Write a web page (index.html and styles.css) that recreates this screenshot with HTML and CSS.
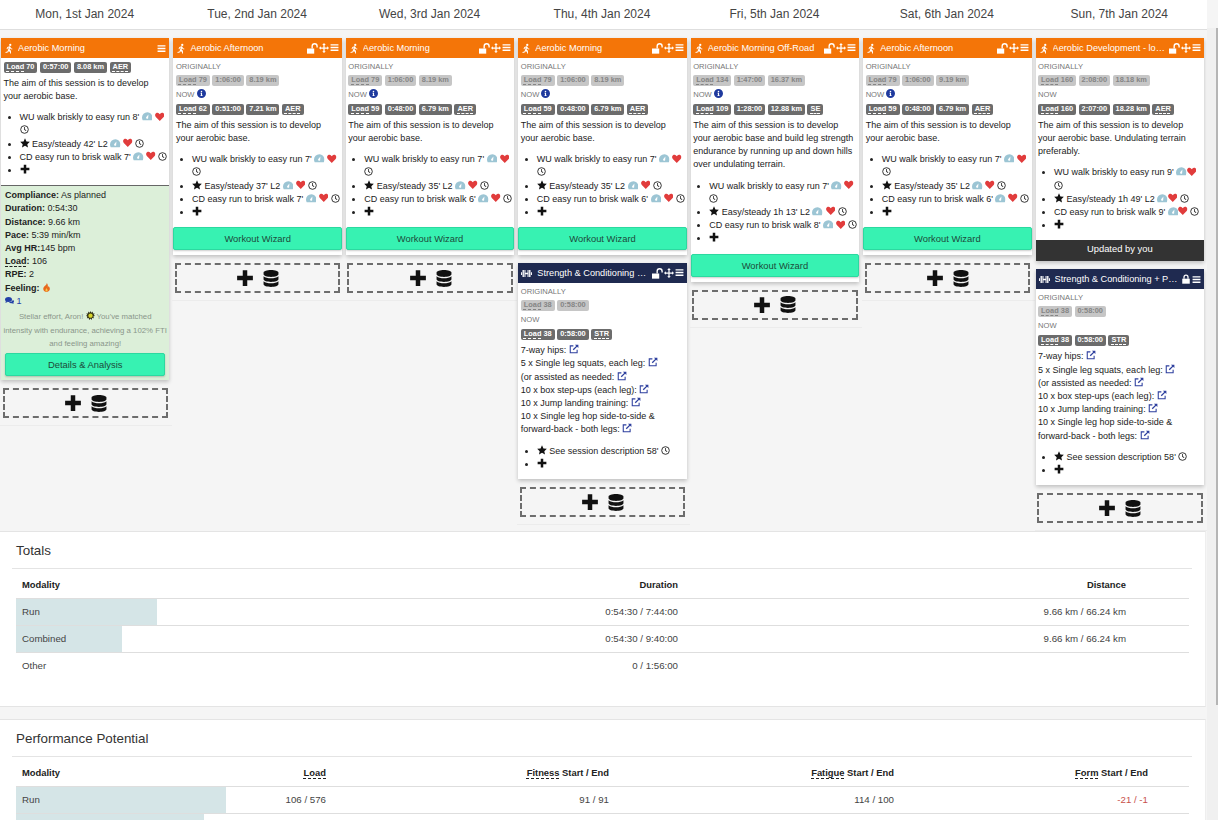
FILE: index.html
```html
<!DOCTYPE html>
<html lang="en">
<head>
    <meta charset="UTF-8">
    <title>Training Plan</title>
    <link rel="stylesheet" href="styles.css">
</head>
<body>
<svg class="sprites" width="0" height="0">
    <symbol id="i-run" viewBox="0 0 16 16"><circle cx="10" cy="2.2" r="1.8"/><path d="M8.6 4.4 5.4 5.6 4 8.6l1.4.6 1.1-2.3 1.2-.4-1.3 3.7-.9 2.5-3.2 1 .4 1.5 4-1.1 1.1-2 1.8 1.7V16h1.5v-4.6L9 9.5l.6-2.2.7 1.4 2.7 1 .5-1.4-2.2-.8-1-2.4c-.4-.8-1-1-1.7-.7z"/></symbol>
    <symbol id="i-lock-open" viewBox="0 0 16 16"><path d="M0 8h10.500v7.500H0z"/><path d="M7.500 8V4.600a3.600 3.600 0 0 1 7.200 0V6.500" fill="none" stroke="currentColor" stroke-width="2"/></symbol>
    <symbol id="i-lock" viewBox="0 0 16 16"><path d="M2 7.500h12V15.500H2z"/><path d="M4.800 7.500V5a3.200 3.200 0 0 1 6.400 0v2.500" fill="none" stroke="currentColor" stroke-width="2"/></symbol>
    <symbol id="i-move" viewBox="0 0 16 16"><path d="M8 0l2.800 3H9v4h4V5.200L16 8l-3 2.800V9H9v4h1.800L8 16l-2.800-3H7V9H3v1.800L0 8l3-2.800V7h4V3H5.200z"/></symbol>
    <symbol id="i-menu" viewBox="0 0 16 16"><path d="M1 2h14v2.400H1zM1 6.800h14v2.400H1zM1 11.600h14V14H1z"/></symbol>
    <symbol id="i-dumbbell" viewBox="0 0 16 16"><path d="M0 6h1.400v4H0zM2.200 3h2v10h-2zM5 3h1.500v10H5zM6.500 7h3v2h-3zM9.500 3H11v10H9.500zM11.800 3h2v10h-2zM14.600 6H16v4h-1.400z"/></symbol>
    <symbol id="i-gauge" viewBox="0 0 16 16"><path fill-rule="evenodd" d="M8 2a8 8 0 0 0-8 8c0 1.500.4 2.900 1.100 4h13.800A8 8 0 0 0 8 2zm1.300 9.400a1.800 1.800 0 0 1-3-1.700l3.500-4.400z"/></symbol>
    <symbol id="i-heart" viewBox="0 0 16 16"><path d="M8 15 1.400 8.300C-.4 6.400-.2 3.500 1.700 2.100c1.800-1.300 4.200-.9 5.500.7l.8 1 .8-1c1.300-1.600 3.700-2 5.500-.7 1.900 1.400 2.100 4.300.3 6.200z"/></symbol>
    <symbol id="i-clock" viewBox="0 0 16 16"><circle cx="8" cy="8" r="6.800" fill="none" stroke="currentColor" stroke-width="1.600"/><path d="M7.300 3.600h1.400v4.100l2.600 1.800-.8 1.100-3.200-2.300z"/></symbol>
    <symbol id="i-star" viewBox="0 0 16 16"><path d="M8 .5l2.300 5 5.400.6-4 3.700 1.100 5.400L8 12.500l-4.800 2.700 1.100-5.400-4-3.700 5.400-.6z"/></symbol>
    <symbol id="i-plus" viewBox="0 0 16 16"><path d="M6 1h4v5h5v4h-5v5H6v-5H1V6h5z"/></symbol>
    <symbol id="i-db" viewBox="0 0 14 16"><path d="M7 0C3.200 0 0 1.100 0 2.500v1.600C0 5.500 3.200 6.600 7 6.600s7-1.100 7-2.500V2.500C14 1.100 10.800 0 7 0z"/><path d="M0 5.800v3C0 10.200 3.200 11.300 7 11.300s7-1.100 7-2.500v-3c-1.500 1.300-4.300 1.900-7 1.900s-5.500-.6-7-1.900z"/><path d="M0 10.500v3C0 14.900 3.200 16 7 16s7-1.100 7-2.500v-3c-1.500 1.300-4.300 1.900-7 1.900s-5.500-.6-7-1.900z"/></symbol>
    <symbol id="i-info" viewBox="0 0 16 16"><path d="M8 0a8 8 0 1 0 0 16A8 8 0 0 0 8 0zm0 3a1.400 1.400 0 1 1 0 2.800A1.400 1.400 0 0 1 8 3zm2 9.500H6.200v-1.200h.8V8H6.200V6.800H9v4.500h1z"/></symbol>
    <symbol id="i-link" viewBox="0 0 16 16"><path d="M7 3H2v11h11V9" fill="none" stroke="currentColor" stroke-width="1.700"/><path d="M9.500 1H15v5.500l-2-2-5.500 5.500-1.500-1.500L11.500 3z"/></symbol>
    <symbol id="i-comments" viewBox="0 0 18 16"><ellipse cx="7" cy="6" rx="7" ry="5"/><path d="M2 9 .8 13 6 10.500z"/><path d="M15.500 6.500c1.600.8 2.500 2 2.500 3.400 0 1-.5 2-1.500 2.700l.8 2.400-3.300-1.600c-2.500.4-5-.3-6.300-2 4.300.1 8-1.800 7.800-4.900z"/></symbol>
    <symbol id="i-fire" viewBox="0 0 14 16"><path d="M7.500 0c.5 3-4 5-5.700 8.200C.2 11.700 2.500 16 7 16s6.800-4 5.600-7.400c-.5-1.500-1.300-2.500-2-3.200 0 1.300-.5 2-1.200 2.400C9.800 5 9.300 2 7.500 0z" fill="#e8681c"/><path d="M7 9c.2 1.500-2 2.400-1.800 4.200.1 1 .9 1.800 1.900 1.800s1.900-.9 1.900-2c0-1.600-1.500-2.500-2-4z" fill="#f7c948"/></symbol>
    <symbol id="i-burst" viewBox="0 0 16 16"><path d="M8 0l1.400 3L12 1l.2 3.300 3.300.2-2 2.600 2.500 1.400-3 1.400 1 3.100-3.200-.5L10 16l-2-2.600L5.500 16l-.7-3.400-3.300.5 1-3.100L0 8.500l2.500-1.400-2-2.600 3.300-.2L4 1l2.600 2z" fill="#2d2d12"/><circle cx="8" cy="8.300" r="3.900" fill="#d6d32c"/></symbol>
</svg>

<div class="page">
    <div class="content">
        <div class="day-heads">
            <div>Mon, 1st Jan 2024</div>
            <div>Tue, 2nd Jan 2024</div>
            <div>Wed, 3rd Jan 2024</div>
            <div>Thu, 4th Jan 2024</div>
            <div>Fri, 5th Jan 2024</div>
            <div>Sat, 6th Jan 2024</div>
            <div>Sun, 7th Jan 2024</div>
        </div>

        <div class="week">
            <!-- monday -->
            <div class="day">
                <div class="card card-done">
                    <div class="card-head run">
                        <svg class="ic head-ic"><use href="#i-run"/></svg>
                        <span class="card-title">Aerobic Morning</span>
                        <span class="head-tools"><svg class="ic"><use href="#i-menu"/></svg></span>
                    </div>
                    <div class="card-body">
                        <div class="chips"><span class="chip"><u>Load</u> 70</span><span class="chip">0:57:00</span><span class="chip">8.08 km</span><span class="chip"><u>AER</u></span></div>
                        <p class="desc">The aim of this session is to develop your aerobic base.</p>
                        <ul class="steps">
                            <li>WU walk briskly to easy run 8' <svg class="ic gauge"><use href="#i-gauge"/></svg> <svg class="ic heart"><use href="#i-heart"/></svg> <svg class="ic"><use href="#i-clock"/></svg></li>
                            <li><svg class="ic star"><use href="#i-star"/></svg> Easy/steady 42' L2 <svg class="ic gauge"><use href="#i-gauge"/></svg> <svg class="ic heart"><use href="#i-heart"/></svg> <svg class="ic"><use href="#i-clock"/></svg></li>
                            <li>CD easy run to brisk walk 7' <svg class="ic gauge"><use href="#i-gauge"/></svg> <svg class="ic heart"><use href="#i-heart"/></svg> <svg class="ic"><use href="#i-clock"/></svg></li>
                            <li><svg class="ic star"><use href="#i-plus"/></svg></li>
                        </ul>
                    </div>
                    <div class="result">
                        <div><b>Compliance:</b> As planned</div>
                        <div><b>Duration:</b> 0:54:30</div>
                        <div><b>Distance:</b> 9.66 km</div>
                        <div><b>Pace:</b> 5:39 min/km</div>
                        <div><b>Avg HR:</b>145 bpm</div>
                        <div><b><u>Load</u>:</b> 106</div>
                        <div><b>RPE:</b> 2</div>
                        <div><b>Feeling:</b> <svg class="ic"><use href="#i-fire"/></svg></div>
                        <div class="comments"><svg class="ic"><use href="#i-comments"/></svg> 1</div>
                        <p class="praise">Stellar effort, Aron! <svg class="ic"><use href="#i-burst"/></svg> You've matched<br>intensity with endurance, achieving a 102% FTI<br>and feeling amazing!</p>
                        <button class="wizard">Details &amp; Analysis</button>
                    </div>
                </div>
                <div class="add"><svg class="add-plus"><use href="#i-plus"/></svg><svg class="add-db"><use href="#i-db"/></svg></div>
            </div>

            <!-- tuesday -->
            <div class="day">
                <div class="card">
                    <div class="card-head run">
                        <svg class="ic head-ic"><use href="#i-run"/></svg>
                        <span class="card-title">Aerobic Afternoon</span>
                        <span class="head-tools"><svg class="ic wide"><use href="#i-lock-open"/></svg><svg class="ic"><use href="#i-move"/></svg><svg class="ic"><use href="#i-menu"/></svg></span>
                    </div>
                    <div class="card-body">
                        <div class="label">ORIGINALLY</div>
                        <div class="chips old"><span class="chip"><u>Load</u> 79</span><span class="chip">1:06:00</span><span class="chip">8.19 km</span></div>
                        <div class="label">NOW <svg class="ic info"><use href="#i-info"/></svg></div>
                        <div class="chips"><span class="chip"><u>Load</u> 62</span><span class="chip">0:51:00</span><span class="chip">7.21 km</span><span class="chip"><u>AER</u></span></div>
                        <p class="desc">The aim of this session is to develop your aerobic base.</p>
                        <ul class="steps">
                            <li>WU walk briskly to easy run 7' <svg class="ic gauge"><use href="#i-gauge"/></svg> <svg class="ic heart"><use href="#i-heart"/></svg> <svg class="ic"><use href="#i-clock"/></svg></li>
                            <li><svg class="ic star"><use href="#i-star"/></svg> Easy/steady 37' L2 <svg class="ic gauge"><use href="#i-gauge"/></svg> <svg class="ic heart"><use href="#i-heart"/></svg> <svg class="ic"><use href="#i-clock"/></svg></li>
                            <li>CD easy run to brisk walk 7' <svg class="ic gauge"><use href="#i-gauge"/></svg> <svg class="ic heart"><use href="#i-heart"/></svg> <svg class="ic"><use href="#i-clock"/></svg></li>
                            <li><svg class="ic star"><use href="#i-plus"/></svg></li>
                        </ul>
                    </div>
                    <button class="wizard">Workout Wizard</button>
                </div>
                <div class="add"><svg class="add-plus"><use href="#i-plus"/></svg><svg class="add-db"><use href="#i-db"/></svg></div>
            </div>

            <!-- wednesday -->
            <div class="day">
                <div class="card">
                    <div class="card-head run">
                        <svg class="ic head-ic"><use href="#i-run"/></svg>
                        <span class="card-title">Aerobic Morning</span>
                        <span class="head-tools"><svg class="ic wide"><use href="#i-lock-open"/></svg><svg class="ic"><use href="#i-move"/></svg><svg class="ic"><use href="#i-menu"/></svg></span>
                    </div>
                    <div class="card-body">
                        <div class="label">ORIGINALLY</div>
                        <div class="chips old"><span class="chip"><u>Load</u> 79</span><span class="chip">1:06:00</span><span class="chip">8.19 km</span></div>
                        <div class="label">NOW <svg class="ic info"><use href="#i-info"/></svg></div>
                        <div class="chips"><span class="chip"><u>Load</u> 59</span><span class="chip">0:48:00</span><span class="chip">6.79 km</span><span class="chip"><u>AER</u></span></div>
                        <p class="desc">The aim of this session is to develop your aerobic base.</p>
                        <ul class="steps">
                            <li>WU walk briskly to easy run 7' <svg class="ic gauge"><use href="#i-gauge"/></svg> <svg class="ic heart"><use href="#i-heart"/></svg> <svg class="ic"><use href="#i-clock"/></svg></li>
                            <li><svg class="ic star"><use href="#i-star"/></svg> Easy/steady 35' L2 <svg class="ic gauge"><use href="#i-gauge"/></svg> <svg class="ic heart"><use href="#i-heart"/></svg> <svg class="ic"><use href="#i-clock"/></svg></li>
                            <li>CD easy run to brisk walk 6' <svg class="ic gauge"><use href="#i-gauge"/></svg> <svg class="ic heart"><use href="#i-heart"/></svg> <svg class="ic"><use href="#i-clock"/></svg></li>
                            <li><svg class="ic star"><use href="#i-plus"/></svg></li>
                        </ul>
                    </div>
                    <button class="wizard">Workout Wizard</button>
                </div>
                <div class="add"><svg class="add-plus"><use href="#i-plus"/></svg><svg class="add-db"><use href="#i-db"/></svg></div>
            </div>

            <!-- thursday -->
            <div class="day">
                <div class="card">
                    <div class="card-head run">
                        <svg class="ic head-ic"><use href="#i-run"/></svg>
                        <span class="card-title">Aerobic Morning</span>
                        <span class="head-tools"><svg class="ic wide"><use href="#i-lock-open"/></svg><svg class="ic"><use href="#i-move"/></svg><svg class="ic"><use href="#i-menu"/></svg></span>
                    </div>
                    <div class="card-body">
                        <div class="label">ORIGINALLY</div>
                        <div class="chips old"><span class="chip"><u>Load</u> 79</span><span class="chip">1:06:00</span><span class="chip">8.19 km</span></div>
                        <div class="label">NOW <svg class="ic info"><use href="#i-info"/></svg></div>
                        <div class="chips"><span class="chip"><u>Load</u> 59</span><span class="chip">0:48:00</span><span class="chip">6.79 km</span><span class="chip"><u>AER</u></span></div>
                        <p class="desc">The aim of this session is to develop your aerobic base.</p>
                        <ul class="steps">
                            <li>WU walk briskly to easy run 7' <svg class="ic gauge"><use href="#i-gauge"/></svg> <svg class="ic heart"><use href="#i-heart"/></svg> <svg class="ic"><use href="#i-clock"/></svg></li>
                            <li><svg class="ic star"><use href="#i-star"/></svg> Easy/steady 35' L2 <svg class="ic gauge"><use href="#i-gauge"/></svg> <svg class="ic heart"><use href="#i-heart"/></svg> <svg class="ic"><use href="#i-clock"/></svg></li>
                            <li>CD easy run to brisk walk 6' <svg class="ic gauge"><use href="#i-gauge"/></svg> <svg class="ic heart"><use href="#i-heart"/></svg> <svg class="ic"><use href="#i-clock"/></svg></li>
                            <li><svg class="ic star"><use href="#i-plus"/></svg></li>
                        </ul>
                    </div>
                    <button class="wizard">Workout Wizard</button>
                </div>
                <div class="card">
                    <div class="card-head strength">
                        <svg class="ic head-ic"><use href="#i-dumbbell"/></svg>
                        <span class="card-title">Strength &amp; Conditioning + Plyometrics</span>
                        <span class="head-tools"><svg class="ic wide"><use href="#i-lock-open"/></svg><svg class="ic"><use href="#i-move"/></svg><svg class="ic"><use href="#i-menu"/></svg></span>
                    </div>
                    <div class="card-body pad-end">
                        <div class="label">ORIGINALLY</div>
                        <div class="chips old"><span class="chip"><u>Load</u> 38</span><span class="chip">0:58:00</span></div>
                        <div class="label">NOW</div>
                        <div class="chips"><span class="chip"><u>Load</u> 38</span><span class="chip">0:58:00</span><span class="chip"><u>STR</u></span></div>
                        <div class="exercises">
                            <div>7-way hips: <svg class="ic link"><use href="#i-link"/></svg></div>
                            <div>5 x Single leg squats, each leg: <svg class="ic link"><use href="#i-link"/></svg></div>
                            <div>(or assisted as needed: <svg class="ic link"><use href="#i-link"/></svg></div>
                            <div>10 x box step-ups (each leg): <svg class="ic link"><use href="#i-link"/></svg></div>
                            <div>10 x Jump landing training: <svg class="ic link"><use href="#i-link"/></svg></div>
                            <div>10 x Single leg hop side-to-side &amp; forward-back - both legs: <svg class="ic link"><use href="#i-link"/></svg></div>
                        </div>
                        <ul class="steps">
                            <li><svg class="ic star"><use href="#i-star"/></svg> See session description 58' <svg class="ic"><use href="#i-clock"/></svg></li>
                            <li><svg class="ic star"><use href="#i-plus"/></svg></li>
                        </ul>
                    </div>
                </div>
                <div class="add"><svg class="add-plus"><use href="#i-plus"/></svg><svg class="add-db"><use href="#i-db"/></svg></div>
            </div>

            <!-- friday -->
            <div class="day">
                <div class="card">
                    <div class="card-head run">
                        <svg class="ic head-ic"><use href="#i-run"/></svg>
                        <span class="card-title">Aerobic Morning Off-Road</span>
                        <span class="head-tools"><svg class="ic wide"><use href="#i-lock-open"/></svg><svg class="ic"><use href="#i-move"/></svg><svg class="ic"><use href="#i-menu"/></svg></span>
                    </div>
                    <div class="card-body">
                        <div class="label">ORIGINALLY</div>
                        <div class="chips old"><span class="chip"><u>Load</u> 134</span><span class="chip">1:47:00</span><span class="chip">16.37 km</span></div>
                        <div class="label">NOW <svg class="ic info"><use href="#i-info"/></svg></div>
                        <div class="chips"><span class="chip"><u>Load</u> 109</span><span class="chip">1:28:00</span><span class="chip">12.88 km</span><span class="chip"><u>SE</u></span></div>
                        <p class="desc">The aim of this session is to develop your aerobic base and build leg strength endurance by running up and down hills over undulating terrain.</p>
                        <ul class="steps">
                            <li>WU walk briskly to easy run 7' <svg class="ic gauge"><use href="#i-gauge"/></svg> <svg class="ic heart"><use href="#i-heart"/></svg> <svg class="ic"><use href="#i-clock"/></svg></li>
                            <li><svg class="ic star"><use href="#i-star"/></svg> Easy/steady 1h 13' L2 <svg class="ic gauge"><use href="#i-gauge"/></svg> <svg class="ic heart"><use href="#i-heart"/></svg> <svg class="ic"><use href="#i-clock"/></svg></li>
                            <li>CD easy run to brisk walk 8' <svg class="ic gauge"><use href="#i-gauge"/></svg> <svg class="ic heart"><use href="#i-heart"/></svg> <svg class="ic"><use href="#i-clock"/></svg></li>
                            <li><svg class="ic star"><use href="#i-plus"/></svg></li>
                        </ul>
                    </div>
                    <button class="wizard">Workout Wizard</button>
                </div>
                <div class="add"><svg class="add-plus"><use href="#i-plus"/></svg><svg class="add-db"><use href="#i-db"/></svg></div>
            </div>

            <!-- saturday -->
            <div class="day">
                <div class="card">
                    <div class="card-head run">
                        <svg class="ic head-ic"><use href="#i-run"/></svg>
                        <span class="card-title">Aerobic Afternoon</span>
                        <span class="head-tools"><svg class="ic wide"><use href="#i-lock-open"/></svg><svg class="ic"><use href="#i-move"/></svg><svg class="ic"><use href="#i-menu"/></svg></span>
                    </div>
                    <div class="card-body">
                        <div class="label">ORIGINALLY</div>
                        <div class="chips old"><span class="chip"><u>Load</u> 79</span><span class="chip">1:06:00</span><span class="chip">9.19 km</span></div>
                        <div class="label">NOW <svg class="ic info"><use href="#i-info"/></svg></div>
                        <div class="chips"><span class="chip"><u>Load</u> 59</span><span class="chip">0:48:00</span><span class="chip">6.79 km</span><span class="chip"><u>AER</u></span></div>
                        <p class="desc">The aim of this session is to develop your aerobic base.</p>
                        <ul class="steps">
                            <li>WU walk briskly to easy run 7' <svg class="ic gauge"><use href="#i-gauge"/></svg> <svg class="ic heart"><use href="#i-heart"/></svg> <svg class="ic"><use href="#i-clock"/></svg></li>
                            <li><svg class="ic star"><use href="#i-star"/></svg> Easy/steady 35' L2 <svg class="ic gauge"><use href="#i-gauge"/></svg> <svg class="ic heart"><use href="#i-heart"/></svg> <svg class="ic"><use href="#i-clock"/></svg></li>
                            <li>CD easy run to brisk walk 6' <svg class="ic gauge"><use href="#i-gauge"/></svg> <svg class="ic heart"><use href="#i-heart"/></svg> <svg class="ic"><use href="#i-clock"/></svg></li>
                            <li><svg class="ic star"><use href="#i-plus"/></svg></li>
                        </ul>
                    </div>
                    <button class="wizard">Workout Wizard</button>
                </div>
                <div class="add"><svg class="add-plus"><use href="#i-plus"/></svg><svg class="add-db"><use href="#i-db"/></svg></div>
            </div>

            <!-- sunday -->
            <div class="day">
                <div class="card">
                    <div class="card-head run">
                        <svg class="ic head-ic"><use href="#i-run"/></svg>
                        <span class="card-title">Aerobic Development - long run</span>
                        <span class="head-tools"><svg class="ic wide"><use href="#i-lock-open"/></svg><svg class="ic"><use href="#i-move"/></svg><svg class="ic"><use href="#i-menu"/></svg></span>
                    </div>
                    <div class="card-body">
                        <div class="label">ORIGINALLY</div>
                        <div class="chips old"><span class="chip"><u>Load</u> 160</span><span class="chip">2:08:00</span><span class="chip">18.18 km</span></div>
                        <div class="label">NOW</div>
                        <div class="chips"><span class="chip"><u>Load</u> 160</span><span class="chip">2:07:00</span><span class="chip">18.28 km</span><span class="chip"><u>AER</u></span></div>
                        <p class="desc">The aim of this session is to develop your aerobic base. Undulating terrain preferably.</p>
                        <ul class="steps">
                            <li>WU walk briskly to easy run 9' <svg class="ic gauge"><use href="#i-gauge"/></svg><svg class="ic heart"><use href="#i-heart"/></svg> <svg class="ic"><use href="#i-clock"/></svg></li>
                            <li><svg class="ic star"><use href="#i-star"/></svg> Easy/steady 1h 49' L2 <svg class="ic gauge"><use href="#i-gauge"/></svg><svg class="ic heart"><use href="#i-heart"/></svg> <svg class="ic"><use href="#i-clock"/></svg></li>
                            <li>CD easy run to brisk walk 9' <svg class="ic gauge"><use href="#i-gauge"/></svg><svg class="ic heart"><use href="#i-heart"/></svg> <svg class="ic"><use href="#i-clock"/></svg></li>
                            <li><svg class="ic star"><use href="#i-plus"/></svg></li>
                        </ul>
                    </div>
                    <div class="updated">Updated by you</div>
                </div>
                <div class="card">
                    <div class="card-head strength">
                        <svg class="ic head-ic"><use href="#i-dumbbell"/></svg>
                        <span class="card-title">Strength &amp; Conditioning + Plyometrics</span>
                        <span class="head-tools"><svg class="ic"><use href="#i-lock"/></svg><svg class="ic"><use href="#i-menu"/></svg></span>
                    </div>
                    <div class="card-body pad-end">
                        <div class="label">ORIGINALLY</div>
                        <div class="chips old"><span class="chip"><u>Load</u> 38</span><span class="chip">0:58:00</span></div>
                        <div class="label">NOW</div>
                        <div class="chips"><span class="chip"><u>Load</u> 38</span><span class="chip">0:58:00</span><span class="chip"><u>STR</u></span></div>
                        <div class="exercises">
                            <div>7-way hips: <svg class="ic link"><use href="#i-link"/></svg></div>
                            <div>5 x Single leg squats, each leg: <svg class="ic link"><use href="#i-link"/></svg></div>
                            <div>(or assisted as needed: <svg class="ic link"><use href="#i-link"/></svg></div>
                            <div>10 x box step-ups (each leg): <svg class="ic link"><use href="#i-link"/></svg></div>
                            <div>10 x Jump landing training: <svg class="ic link"><use href="#i-link"/></svg></div>
                            <div>10 x Single leg hop side-to-side &amp; forward-back - both legs: <svg class="ic link"><use href="#i-link"/></svg></div>
                        </div>
                        <ul class="steps">
                            <li><svg class="ic star"><use href="#i-star"/></svg> See session description 58' <svg class="ic"><use href="#i-clock"/></svg></li>
                            <li><svg class="ic star"><use href="#i-plus"/></svg></li>
                        </ul>
                    </div>
                </div>
                <div class="add"><svg class="add-plus"><use href="#i-plus"/></svg><svg class="add-db"><use href="#i-db"/></svg></div>
            </div>
        </div>

        <section class="panel totals">
            <h2>Totals</h2>
            <table>
                <thead>
                    <tr><th class="first">Modality</th><th class="col-dur">Duration</th><th class="col-dist">Distance</th></tr>
                </thead>
                <tbody>
                    <tr class="bar" style="--pct: 12%"><td class="first">Run</td><td class="col-dur">0:54:30 / 7:44:00</td><td class="col-dist">9.66 km / 66.24 km</td></tr>
                    <tr class="bar" style="--pct: 9%"><td class="first">Combined</td><td class="col-dur">0:54:30 / 9:40:00</td><td class="col-dist">9.66 km / 66.24 km</td></tr>
                    <tr class="last"><td class="first">Other</td><td class="col-dur">0 / 1:56:00</td><td class="col-dist"></td></tr>
                </tbody>
            </table>
        </section>

        <section class="panel potential">
            <h2>Performance Potential</h2>
            <table>
                <thead>
                    <tr><th class="first">Modality</th><th class="col-load"><u>Load</u></th><th class="col-fit"><u>Fitness</u> Start / End</th><th class="col-fat"><u>Fatigue</u> Start / End</th><th class="col-form"><u>Form</u> Start / End</th></tr>
                </thead>
                <tbody>
                    <tr class="bar" style="--pct: 17.9%"><td class="first">Run</td><td>106 / 576</td><td>91 / 91</td><td>114 / 100</td><td class="col-form neg">-21 / -1</td></tr>
                    <tr class="bar" style="--pct: 16%"><td class="first">&nbsp;</td><td></td><td></td><td></td><td></td></tr>
                </tbody>
            </table>
        </section>
    </div>
    <div class="scrollbar"><div class="thumb"></div></div>
</div>
</body>
</html>
```

FILE: styles.css
```css
* {
    box-sizing: border-box;
}
html, body {
    margin: 0;
    height: 820px;
    overflow: hidden;
}
body {
    font-family: "Liberation Sans", Arial, sans-serif;
    font-size: 9px;
    line-height: 13.2px;
    color: #222;
    background-color: #f5f5f5;
}
.sprites {
    position: absolute;
}
.page {
    display: flex;
    height: 820px;
}
.content {
    flex: 1;
    min-width: 0;
}
.scrollbar {
    width: 11px;
    background-color: #f0f0f0;
    margin-top: 28px;
    display: flex;
    justify-content: flex-end;
}
.thumb {
    width: 2px;
    height: 677px;
    background-color: #b5b5b5;
}

/* day headings */
.day-heads {
    display: grid;
    grid-template-columns: repeat(7, minmax(0, 1fr));
    height: 30px;
    background-color: #fff;
    border-bottom: 1px solid #dedede;
    font-size: 12px;
    line-height: 28px;
    text-align: center;
    color: #444;
}
.day-heads div {
    padding-right: 3px;
}

/* week */
.week {
    display: grid;
    grid-template-columns: repeat(7, minmax(0, 1fr));
    height: 501px;
    align-items: start;
}
.day {
    padding: 8px 3px 7px 1px;
    border-bottom: 1px solid #ececec;
}
.card {
    background-color: #fff;
    box-shadow: 0 2px 4px rgba(0, 0, 0, 0.22);
    margin-bottom: 8px;
}
.card-head {
    display: flex;
    align-items: center;
    height: 20px;
    padding: 0 3px;
    color: #fff;
    font-size: 9.2px;
}
.card-head.run {
    background-color: #f47508;
}
.card-head.strength {
    background-color: #1f2a50;
}
.card-head .head-ic {
    flex: none;
    margin-right: 4px;
    width: 10px;
    height: 11px;
}
.strength .head-ic {
    width: 11px;
    margin-right: 5px;
}
.card-title {
    flex: 1;
    min-width: 0;
    padding-top: 1px;
    white-space: nowrap;
    overflow: hidden;
    text-overflow: ellipsis;
}
.head-tools {
    flex: none;
    display: flex;
    gap: 1px;
    margin-left: 2px;
}
.head-tools .ic {
    width: 10px;
    height: 10px;
}
.head-tools .ic:last-child {
    width: 9px;
    height: 9px;
    margin-top: 0.5px;
}
.head-tools .wide {
    width: 11px;
    height: 11px;
}
.ic {
    display: inline-block;
    width: 9px;
    height: 9px;
    fill: currentColor;
    vertical-align: -1px;
}
.ic.gauge {
    width: 10.5px;
    height: 10.5px;
    vertical-align: -1.5px;
    color: #9cc5d4;
}
.ic.heart {
    width: 9.5px;
    height: 9.5px;
    color: #e13c3c;
}
.ic.info {
    color: #1f3a9e;
}
.ic.link {
    width: 10px;
    height: 10px;
    color: #2d3f9e;
}
.ic.star {
    width: 10px;
    height: 10px;
    color: #111;
}
.card-body {
    padding: 3px 2px 0 2.5px;
}
.card-body.pad-end {
    padding-bottom: 8px;
}
.label {
    color: #777;
    font-size: 7.6px;
    height: 13px;
    line-height: 11px;
}
.chips {
    display: flex;
    gap: 2.5px;
    height: 15px;
    padding-top: 1px;
}
.chips + .label {
    height: 14px;
    line-height: 12px;
}
.chip {
    background-color: #6c6c6c;
    color: #fff;
    font-size: 7.4px;
    font-weight: bold;
    line-height: 10px;
    height: 10.5px;
    padding: 0 3px;
    border-radius: 2px;
}
.old .chip {
    background-color: #c6c6c6;
    color: #858585;
}
.chip u,
th u,
.result u {
    text-decoration: underline dashed 1px;
    text-underline-offset: 1.5px;
}
.desc {
    margin: 0.5px 0 0;
}
.exercises {
    margin-top: 1px;
}
.steps {
    margin: 8.2px 0 0;
    padding: 0 0 0 16px;
}
.wizard {
    display: block;
    width: 100%;
    height: 23px;
    margin: 8px 0 0;
    background-color: #37f2b2;
    border: 1px solid #2cd9a0;
    border-radius: 2px;
    box-shadow: 0 1px 2px rgba(0, 0, 0, 0.2);
    color: #1d4a3a;
    font-family: inherit;
    font-size: 9.4px;
}
.card:has(> .wizard) {
    padding-bottom: 5px;
}
.result {
    margin-top: 8px;
    padding: 3px 4px 4px;
    background-color: #dcefd9;
    border-top: 1px solid #666;
}
.comments {
    color: #2340a8;
}
.praise {
    margin: 2.5px -3px 0;
    text-align: center;
    color: #8a968a;
    font-size: 7.8px;
    white-space: nowrap;
}
.result .wizard {
    margin-top: 3px;
}
.updated {
    height: 21px;
    margin-top: 8px;
    background-color: #333;
    color: #fff;
    text-align: center;
    font-size: 9.4px;
    line-height: 18px;
}
.add {
    display: flex;
    align-items: center;
    justify-content: center;
    gap: 9px;
    height: 30px;
    margin: 0 1.5px;
    border: 2px dashed #6d6d6d;
}
.add-plus {
    width: 18px;
    height: 18px;
    fill: #111;
}
.add-db {
    width: 16px;
    height: 17px;
    fill: #111;
}

/* panels under the week */
.panel {
    background-color: #fff;
    border-top: 1px solid #e4e4e4;
    border-bottom: 1px solid #e4e4e4;
    border-right: 1px solid #eee;
    margin-right: 1px;
    padding: 0 13px 0 12px;
}
.panel h2 {
    margin: 0;
    padding: 9px 4px 0;
    height: 37px;
    font-size: 13.4px;
    font-weight: normal;
    line-height: 19px;
    color: #333;
    border-bottom: 1px solid #e4e4e4;
}
.totals {
    height: 176px;
}
.potential {
    margin-top: 12px;
    height: 200px;
}
table {
    width: 1173px;
    margin-left: 4px;
    border-collapse: collapse;
    table-layout: fixed;
}
th, td {
    height: 27px;
    padding: 0 6px;
    font-size: 9.7px;
    text-align: right;
    color: #444;
    border-bottom: 1px solid #dedede;
}
th {
    height: 29px;
    padding-top: 3px;
    font-size: 9.4px;
    font-weight: bold;
    color: #222;
}
th.first,
td.first {
    text-align: left;
}
.bar {
    background: linear-gradient(to right, #d5e5e7 var(--pct), transparent var(--pct));
}
.totals .first {
    width: 220px;
}
.col-dur {
    width: 448px;
}
th.col-dist,
td.col-dist {
    padding-right: 63px;
}
.potential .first {
    width: 100px;
}
.col-load {
    width: 216px;
}
.col-fit {
    width: 283px;
}
.col-fat {
    width: 285px;
}
th.col-form,
td.col-form {
    padding-right: 41px;
}
.last td {
    border-bottom: none;
}
td.neg {
    color: #c8504a;
}
```
